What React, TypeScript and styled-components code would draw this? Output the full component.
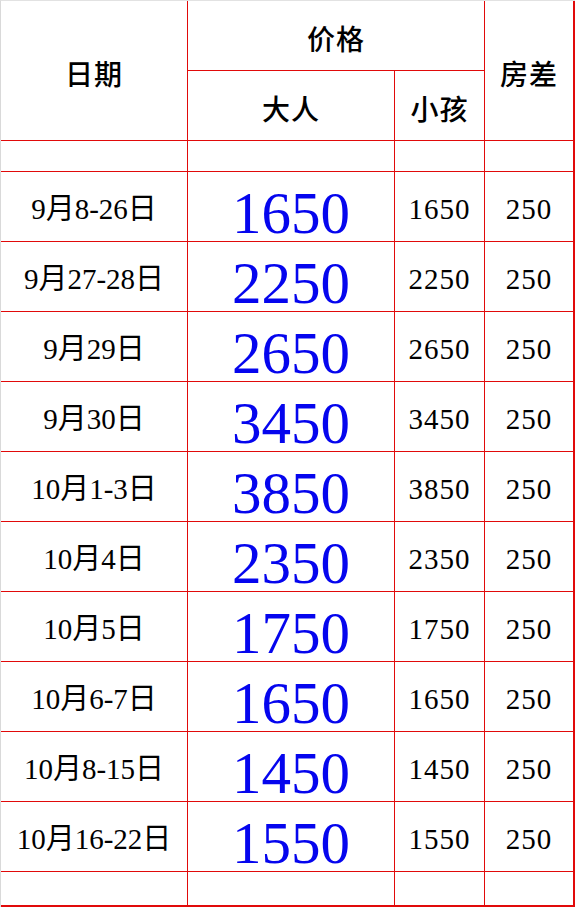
import React from "react";
import styled, { createGlobalStyle, css } from "styled-components";

const GlobalStyle = createGlobalStyle`
  html, body { margin: 0; padding: 0; background: #ffffff; }
  body { font-family: "Liberation Serif", "Noto Sans CJK SC", serif; }
`;

const RED = "#e10a0a";

const Sheet = styled.div`
  width: 575px;
  height: 907px;
  box-sizing: border-box;
  border-left: 1px solid #d9d9d9;
  border-top: 1px solid #e2e2e2;
  display: grid;
  grid-template-columns: 187px 207px 90px 90px;
  grid-template-rows: 70px 70px 31px repeat(10, 70px) 35px;
  background: #fff;
`;

const Cell = styled.div<{
  $lastCol?: boolean;
  $lastRow?: boolean;
  $col?: string;
  $row?: string;
}>`
  box-sizing: border-box;
  border-right: ${(p) => (p.$lastCol ? "2px" : "1px")} solid ${RED};
  border-bottom: ${(p) => (p.$lastRow ? "2px" : "1px")} solid ${RED};
  display: flex;
  align-items: center;
  justify-content: center;
  color: #000;
  line-height: 1;
  white-space: nowrap;
  ${(p) => p.$col && css`grid-column: ${p.$col};`}
  ${(p) => p.$row && css`grid-row: ${p.$row};`}
`;

const HeadCell = styled(Cell)<{ $shift?: number }>`
  font-family: "Noto Sans CJK SC", sans-serif;
  font-size: 28px;
  font-weight: 500;
  letter-spacing: 1px;
  padding-top: ${(p) => p.$shift ?? 0}px;
`;

const DateCell = styled(Cell)`
  font-family: "Liberation Serif", "Noto Sans CJK SC", serif;
  font-size: 29px;
  padding-top: 5px;
`;

const AdultCell = styled(Cell)`
  font-family: "Liberation Serif", serif;
  font-size: 59px;
  color: #0505ee;
  padding-top: 13px;
`;

const SmallNum = styled(Cell)`
  font-family: "Liberation Serif", serif;
  font-size: 29px;
  letter-spacing: 1px;
  padding-top: 5px;
`;

const rows: [string, string][] = [
  ["9月8-26日", "1650"],
  ["9月27-28日", "2250"],
  ["9月29日", "2650"],
  ["9月30日", "3450"],
  ["10月1-3日", "3850"],
  ["10月4日", "2350"],
  ["10月5日", "1750"],
  ["10月6-7日", "1650"],
  ["10月8-15日", "1450"],
  ["10月16-22日", "1550"],
];

export default function App() {
  return (
    <>
      <GlobalStyle />
      <Sheet>
        <HeadCell $row="1 / 3" $col="1" $shift={4}>日期</HeadCell>
        <HeadCell $col="2 / 4" $shift={4}>价格</HeadCell>
        <HeadCell $row="1 / 3" $col="4" $lastCol $shift={4}>房差</HeadCell>
        <HeadCell $col="2" $shift={4}>大人</HeadCell>
        <HeadCell $col="3" $shift={4}>小孩</HeadCell>

        <Cell />
        <Cell />
        <Cell />
        <Cell $lastCol />

        {rows.map(([d, p]) => (
          <React.Fragment key={d}>
            <DateCell>{d}</DateCell>
            <AdultCell>{p}</AdultCell>
            <SmallNum>{p}</SmallNum>
            <SmallNum $lastCol>250</SmallNum>
          </React.Fragment>
        ))}

        <Cell $lastRow />
        <Cell $lastRow />
        <Cell $lastRow />
        <Cell $lastRow $lastCol />
      </Sheet>
    </>
  );
}
